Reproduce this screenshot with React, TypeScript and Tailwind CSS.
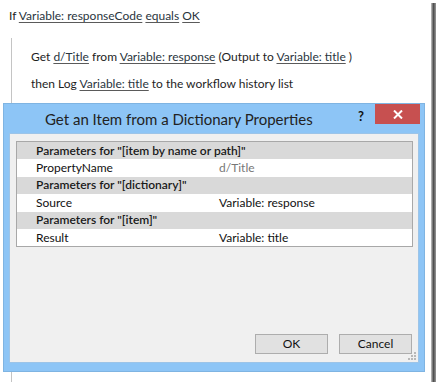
import React from "react";

const font = { fontFamily: '"Segoe UI", Lato, "Open Sans", sans-serif' };

function L({ children }: { children: React.ReactNode }) {
  return <span className="underline decoration-[#5a5a5a] underline-offset-2 text-[#2a3540]">{children}</span>;
}

function Header({ children }: { children: React.ReactNode }) {
  return (
    <div className="h-[17.4px] flex items-center bg-[#d9d9d9] pl-[19px] font-semibold text-[#1a1a1a]">
      {children}
    </div>
  );
}

function Row({ label, value, muted }: { label: string; value: string; muted?: boolean }) {
  return (
    <div className="h-[17.4px] flex items-center bg-white pl-[19px] text-[#111]">
      <span className="w-[183px]">{label}</span>
      <span className={muted ? "text-[#777]" : "text-[#111]"}>{value}</span>
    </div>
  );
}

export default function App() {
  return (
    <div className="relative w-[436px] h-[382px] bg-white overflow-hidden text-[12px]" style={font}>
      <div className="flex flex-col w-full h-full">
        <div className="flex flex-1">
          <div className="w-[431px] h-full bg-white pt-[7px] text-[#1e1e1e]">
            <div className="pl-[9px] h-[18px] leading-[18px]">
              If <L>Variable: responseCode</L> <L>equals</L> <L>OK</L>
            </div>
            <div className="ml-[11px] mt-[13px] border-l-[1.5px] border-[#c4c4c4] h-[400px] pl-[19px] pt-[10px]">
              <div className="h-[18px] leading-[18px]">
                Get <L>d/Title</L> from <L>Variable: response</L> (Output to <L>Variable: title</L> )
              </div>
              <div className="h-[18px] leading-[18px] mt-[9px]">
                then Log <L>Variable: title</L> to the workflow history list
              </div>
            </div>
          </div>
          <div className="flex-1 flex flex-col pt-[3px]">
            <div className="flex-1 bg-gradient-to-r from-[#c8c8c8] via-[#505050] to-[#9a9a9a]" />
          </div>
        </div>
        <div className="h-[6px] pl-[3px] pt-[1px] flex">
          <div className="flex-1 bg-gradient-to-b from-[#5a5a5a] via-[#6a6a6a] to-[#c0c0c0]" />
        </div>
      </div>

      {/* Dialog */}
      <div className="absolute left-[3px] top-[103px] w-[422px] h-[269px] bg-[#8dc5f6] border border-[#7fb4e2] flex flex-col">
        <div className="h-[29px] relative flex items-center">
          <div className="pl-[41px] text-[15px] text-[#222] leading-none pt-[1px]">
            Get an Item from a Dictionary Properties
          </div>
          <div className="absolute left-[354px] top-[6px] text-[13px] font-bold text-[#111] leading-none">?</div>
          <div className="absolute left-[371px] top-0 w-[45px] h-[20px] bg-[#c75050] flex items-center justify-center">
            <svg width="10" height="9" viewBox="0 0 10 9">
              <path d="M1 0.5 L9 8.5 M9 0.5 L1 8.5" stroke="white" strokeWidth="2" />
            </svg>
          </div>
        </div>
        <div className="relative ml-[5px] mr-[5px] mb-[8px] flex-1 bg-[#f0f0f0] border border-[#9cc4e8] flex flex-col pt-[7px] pl-[6px] pr-[5px]">
          <div className="border border-[#a8a8a8] flex flex-col">
            <Header>Parameters for "[item by name or path]"</Header>
            <Row label="PropertyName" value="d/Title" muted />
            <Header>Parameters for "[dictionary]"</Header>
            <Row label="Source" value="Variable: response" />
            <Header>Parameters for "[item]"</Header>
            <Row label="Result" value="Variable: title" />
          </div>
          <div className="flex-1" />
          <div className="flex justify-end gap-[11px] pb-[8px] pr-[1px]">
            <button className="w-[73px] h-[20px] bg-[#e1e1e1] border border-[#adadad] text-[12px] text-[#111] leading-none">OK</button>
            <button className="w-[73px] h-[20px] bg-[#e1e1e1] border border-[#adadad] text-[12px] text-[#111] leading-none">Cancel</button>
          </div>
          <svg className="absolute right-[1px] bottom-[1px]" width="9" height="9" viewBox="0 0 9 9">
            <g fill="#b8b8b8">
              <rect x="6" y="0" width="2" height="2" />
              <rect x="3" y="3" width="2" height="2" />
              <rect x="6" y="3" width="2" height="2" />
              <rect x="0" y="6" width="2" height="2" />
              <rect x="3" y="6" width="2" height="2" />
              <rect x="6" y="6" width="2" height="2" />
            </g>
          </svg>
        </div>
      </div>
    </div>
  );
}
